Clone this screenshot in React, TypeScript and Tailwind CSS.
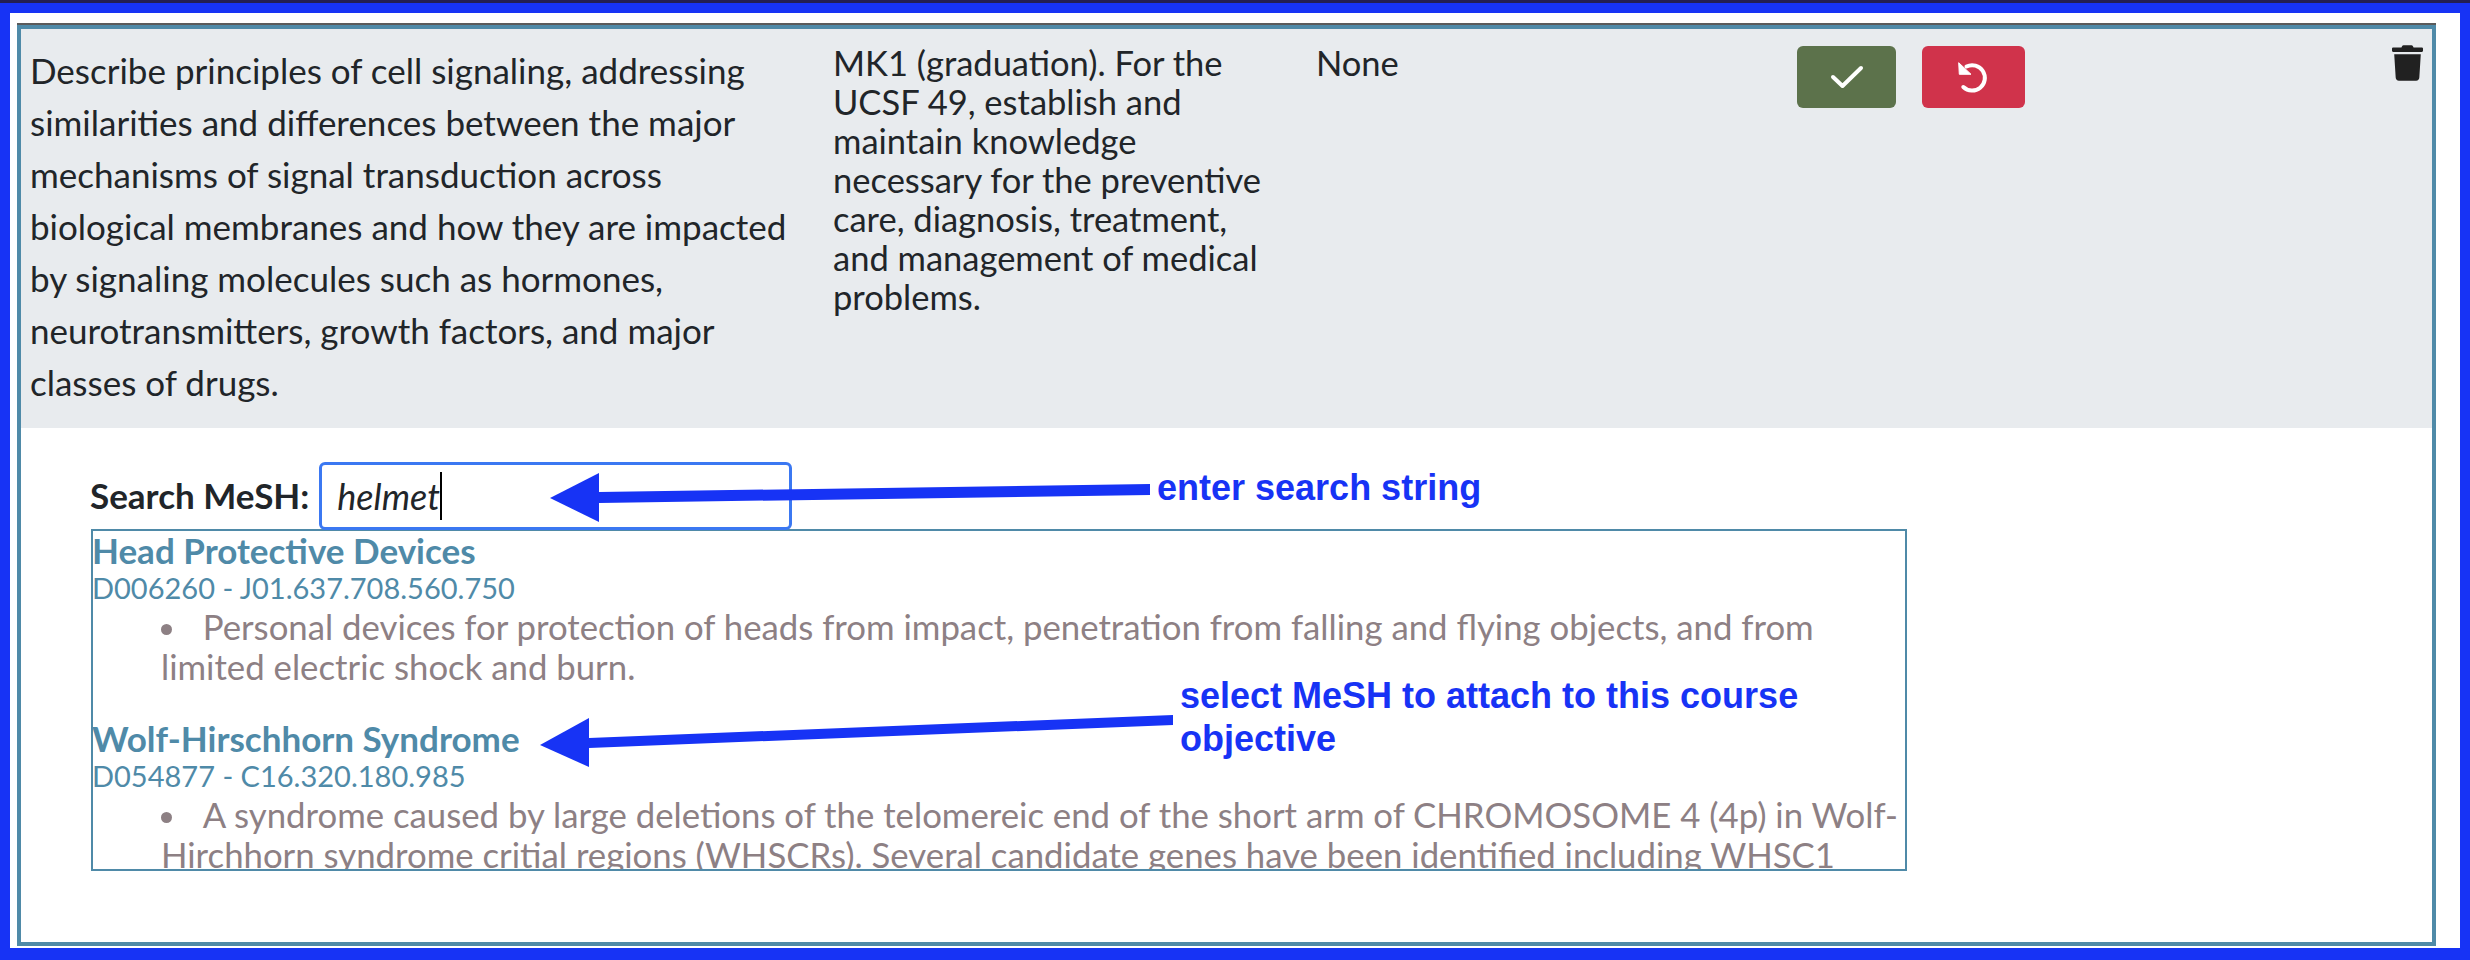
import { FaTrash } from "react-icons/fa";

// Annotation arrows sit on top of the form, the way they were pasted on the screenshot
function Arrows() {
  return (
    <svg className="absolute left-0 top-0 z-20 pointer-events-none" width="2470" height="960" viewBox="0 0 2470 960">
      <g fill="#1733f5">
        <polygon points="550,498 599,473 599,522" />
        <polygon points="599,492 1150,484 1150,495 599,503" />
        <polygon points="540,745 589,718 589,767" />
        <polygon points="589,738 1173,715 1173,725 589,748" />
      </g>
    </svg>
  );
}

function Note({ className, children }: { className: string; children: React.ReactNode }) {
  return (
    <div className={`absolute z-20 font-['Liberation_Sans',sans-serif] font-bold text-[#1733f5] text-[36px] leading-[43px] ${className}`}>
      {children}
    </div>
  );
}

function MeshResult({ name, code, desc }: { name: string; code: string; desc: string }) {
  return (
    <div className="mb-[32px]">
      <div className="-ml-[1px] -mt-[1px] mb-[1px] text-[35px] leading-[40px] font-bold text-[#4f8aa8]">{name}</div>
      <div className="-ml-[1px] text-[29px] leading-[33px] text-[#4f8aa8]">{code}</div>
      <ul className="list-inside list-disc pl-[68px] pt-[3px] text-[34.75px] leading-[40px] text-[#8d8084]">
        <li>
          <span className="-ml-[5px]">{desc}</span>
        </li>
      </ul>
    </div>
  );
}

export default function App() {
  return (
    <div className="relative h-[960px] w-[2470px] overflow-hidden bg-white font-['Lato','Noto_Sans',sans-serif]">
      <div className="h-[3px] bg-[#241f52]" />
      <div className="h-[957px] border-x-[10px] border-t-[10px] border-b-[12px] border-[#1733f5] pl-[7px] pr-[24px] pt-[10px]">
        <div className="h-[923px] border-t-2 border-[#5b5b5b]">
          <div className="h-[921px] border-4 border-[#4f8aa8]">
            {/* objective row */}
            <div className="flex h-[399px] bg-[#e8ebee] text-[#212529]">
              <div className="w-[812px] shrink-0 pl-[9px] pr-[30px] pt-[15px] text-[35px] leading-[52px]">
                Describe principles of cell signaling, addressing similarities and differences between the major
                mechanisms of signal transduction across biological membranes and how they are impacted by signaling
                molecules such as hormones, neurotransmitters, growth factors, and major classes of drugs.
              </div>
              <div className="w-[483px] shrink-0 pr-[41px] pt-[14px] text-[34.5px] leading-[39px]">
                MK1 (graduation). For the UCSF 49, establish and maintain knowledge necessary for the preventive care,
                diagnosis, treatment, and management of medical problems.
              </div>
              <div className="w-[481px] shrink-0 pt-[14px] text-[34.5px] leading-[39px]">None</div>
              <div className="flex flex-1 items-start pt-[17px]">
                <button className="flex h-[62px] w-[99px] items-center justify-center rounded-[6px] bg-[#5c724b] text-white">
                  <svg width="34" height="26" viewBox="0 0 34 26" fill="none" stroke="currentColor" strokeWidth="4" strokeLinecap="round" strokeLinejoin="round">
                    <path d="M3 13 L12.5 22 L31 4" />
                  </svg>
                </button>
                <button className="ml-[26px] flex h-[62px] w-[103px] items-center justify-center rounded-[6px] bg-[#d0334b] text-white">
                  <svg width="36" height="36" viewBox="0 0 36 36" fill="none">
                    <path d="M10.5 7.5 A12.7 12.7 0 1 1 7.3 28" stroke="currentColor" strokeWidth="4" strokeLinecap="round" />
                    <path d="M2.7 3.7 L3.3 15.3 L15 15.3 Z" fill="currentColor" stroke="currentColor" strokeWidth="1" strokeLinejoin="round" />
                  </svg>
                </button>
                <FaTrash className="ml-auto mr-[9px] -mt-[1px] h-[36px] w-[31px] text-[#212121]" />
              </div>
            </div>

            {/* search */}
            <div className="pl-[70px]">
              <div className="flex h-[102px] items-end">
                <label className="-ml-[1px] mb-[15px] mr-[10px] text-[35px] leading-[40px] font-bold text-[#212529]">Search MeSH:</label>
                <div className="relative z-10 flex h-[68px] w-[473px] items-center rounded-[6px] border-[3px] border-[#3b78f2] bg-white pl-[15px] text-[36px] italic text-[#212529]">
                  helmet
                  <span className="h-[48px] w-[2px] bg-black" />
                </div>
              </div>
              <div className="-mt-[1px] h-[342px] w-[1816px] overflow-hidden border-2 border-[#4f8aa8]">
                <MeshResult
                  name="Head Protective Devices"
                  code="D006260 - J01.637.708.560.750"
                  desc="Personal devices for protection of heads from impact, penetration from falling and flying objects, and from limited electric shock and burn."
                />
                <MeshResult
                  name="Wolf-Hirschhorn Syndrome"
                  code="D054877 - C16.320.180.985"
                  desc="A syndrome caused by large deletions of the telomereic end of the short arm of CHROMOSOME 4 (4p) in Wolf-Hirchhorn syndrome critial regions (WHSCRs). Several candidate genes have been identified including WHSC1"
                />
              </div>
            </div>
          </div>
        </div>
      </div>
      <Arrows />
      <Note className="left-[1157px] top-[466px]">enter search string</Note>
      <Note className="left-[1180px] top-[674px] w-[640px]">select MeSH to attach to this course objective</Note>
    </div>
  );
}
